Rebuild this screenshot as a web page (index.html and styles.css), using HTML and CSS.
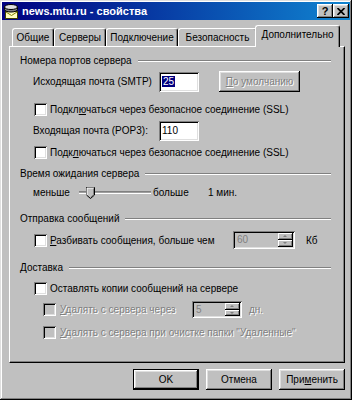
FILE: index.html
```html
<!DOCTYPE html>
<html lang="ru">
<head>
    <meta charset="UTF-8">
    <title>news.mtu.ru - свойства</title>
    <link rel="stylesheet" href="styles.css">
</head>
<body>
<div class="window">
    <div class="titlebar">
        <svg class="app-icon" viewBox="0 0 16 16" width="16" height="16">
            <rect x="2.5" y="8.5" width="12" height="7" fill="#ffffc0" stroke="#404000"/>
            <path d="M3 9 L8.5 12.5 L14 9" fill="none" stroke="#808000"/>
            <path d="M1.5 4 v2.5 a6.5 2.5 0 0 0 13 0 v-2.5" fill="#808080" stroke="#000"/>
            <ellipse cx="8" cy="4" rx="6.5" ry="2.5" fill="#dfdfdf" stroke="#000"/>
        </svg>
        <span class="title">news.mtu.ru - свойства</span>
        <div class="tb-btn">?</div>
        <div class="tb-btn">
            <svg width="8" height="7" viewBox="0 0 8 7"><path d="M0.5 0 L7.5 7 M7.5 0 L0.5 7" stroke="#000" stroke-width="1.7"/></svg>
        </div>
    </div>

    <div class="dialog">
        <div class="tabs">
            <div class="tab tab-general">Общие</div>
            <div class="tab tab-servers">Серверы</div>
            <div class="tab tab-connect">Подключение</div>
            <div class="tab tab-security">Безопасность</div>
            <div class="tab tab-advanced active">Дополнительно</div>
        </div>

        <div class="panel">
            <div class="group-head"><span>Номера портов сервера</span><i class="rule"></i></div>
            <div class="row port-row first-port">
                <span class="field-label">Исхо<u>д</u>ящая почта (SMTP)</span>
                <span class="textbox"><span class="sel">25</span></span>
                <span class="btn btn-default-port disabled"><span><u>П</u>о умолчанию</span></span>
            </div>
            <div class="check-row ssl-1">
                <span class="checkbox"></span>
                <span>Подкл<u>ю</u>чаться через безопасное соединение (SSL)</span>
            </div>
            <div class="row port-row second-port">
                <span class="field-label">Входящая почта (POP3):</span>
                <span class="textbox">110</span>
            </div>
            <div class="check-row ssl-2">
                <span class="checkbox"></span>
                <span>Подк<u>л</u>ючаться через безопасное соединение (SSL)</span>
            </div>

            <div class="group-head gh-timeout"><span>Время ожидания сервера</span><i class="rule"></i></div>
            <div class="row slider-row">
                <span class="sl-min">меньше</span>
                <div class="slider">
                    <div class="track"></div>
                    <svg class="thumb" width="9" height="12" viewBox="0 0 9 12">
                        <path d="M0.5 0.5 H8.5 V8 L4.5 11.5 L0.5 8 Z" fill="#c0c0c0" stroke="#000"/>
                        <path d="M1 8 V1 H8" fill="none" stroke="#fff"/>
                        <path d="M7.5 1.5 V7.7 L4.5 10.3" fill="none" stroke="#808080"/>
                    </svg>
                </div>
                <span class="sl-max">больше</span>
                <span>1 мин.</span>
            </div>

            <div class="group-head gh-send"><span>Отправка сообщений</span><i class="rule"></i></div>
            <div class="check-row split-row">
                <span class="checkbox"></span>
                <span class="split-label"><u>Р</u>азбивать сообщения, больше чем</span>
                <span class="spinner spin-size">
                    <span class="spin-val">60</span>
                    <span class="spin-btns"><span class="spin-up"></span><span class="spin-down"></span></span>
                </span>
                <span class="unit-kb">Кб</span>
            </div>

            <div class="group-head gh-delivery"><span>Доставка</span><i class="rule"></i></div>
            <div class="check-row keep-row">
                <span class="checkbox"></span>
                <span>Оставлять копии сообщений на сервере</span>
            </div>
            <div class="check-row sub-row days-row">
                <span class="checkbox disabled"></span>
                <span class="days-label disabled-text"><u>У</u>далять с сервера через</span>
                <span class="spinner spin-days">
                    <span class="spin-val">5</span>
                    <span class="spin-btns"><span class="spin-up"></span><span class="spin-down"></span></span>
                </span>
                <span class="unit-days disabled-text">дн.</span>
            </div>
            <div class="check-row sub-row purge-row">
                <span class="checkbox disabled"></span>
                <span class="disabled-text"><u>У</u>далять с сервера при очистке папки "Удаленные"</span>
            </div>
        </div>

        <div class="dlg-buttons">
            <span class="btn btn-ok">OK</span>
            <span class="btn">Отмена</span>
            <span class="btn"><span>При<u>м</u>енить</span></span>
        </div>
    </div>
</div>
</body>
</html>
```

FILE: styles.css
```css
* {
    box-sizing: border-box;
}

body {
    margin: 0;
    background: #c0c0c0;
    font-family: "Liberation Sans", Arial, sans-serif;
    font-size: 10px;
    line-height: 13px;
    color: #000;
    white-space: nowrap;
}

u {
    text-decoration: underline;
}

.window {
    width: 352px;
    height: 400px;
    padding: 2px;
    background: #c0c0c0;
    box-shadow: inset -1px -1px #000, inset 1px 1px #dfdfdf, inset -2px -2px #808080, inset 2px 2px #fff;
}

/* title bar */
.titlebar {
    height: 18px;
    display: flex;
    align-items: center;
    padding: 0 1px 0 1px;
    background: linear-gradient(90deg, #000080, #1084d0);
    color: #fff;
    font-size: 11px;
    font-weight: bold;
}

.app-icon {
    margin-right: 3px;
    flex: none;
}

.title {
    flex: 1;
}

.tb-btn {
    width: 16px;
    height: 14px;
    display: flex;
    align-items: center;
    justify-content: center;
    background: #c0c0c0;
    color: #000;
    font-size: 11px;
    font-weight: bold;
    box-shadow: inset -1px -1px #000, inset 1px 1px #fff, inset -2px -2px #808080, inset 2px 2px #dfdfdf;
}

/* dialog body */
.dialog {
    padding: 5px 5px 0 7px;
}

.tabs {
    display: flex;
    align-items: flex-end;
    height: 21px;
    padding-left: 3px;
}

.tab {
    height: 18px;
    padding-top: 2px;
    text-align: center;
    border: 1px solid;
    border-color: #fff #000 transparent #fff;
    border-bottom: none;
    border-radius: 3px 3px 0 0;
    box-shadow: inset -1px 0 #808080;
}

.tab-general { width: 42px; }
.tab-servers { width: 52px; }
.tab-connect { width: 72px; }
.tab-security { width: 79px; }

.tab.active {
    position: relative;
    width: 85px;
    height: 22px;
    margin: 0 -2px -1px -2px;
    padding-top: 2px;
    background: #c0c0c0;
}

.panel {
    width: 336px;
    height: 317px;
    padding: 7px 13px 0 10px;
    border: 1px solid;
    border-color: #fff #000 #000 #fff;
    box-shadow: inset -1px -1px #808080;
}

.group-head {
    display: flex;
    align-items: center;
    gap: 6px;
    height: 13px;
}

.rule {
    flex: 1;
    height: 2px;
    border-top: 1px solid #808080;
    border-bottom: 1px solid #fff;
}

.gh-timeout { margin-top: 8px; }
.gh-send { margin-top: 13px; }
.gh-delivery { margin-top: 12px; }

.row {
    display: flex;
    align-items: center;
    padding-left: 13px;
}

.port-row {
    height: 21px;
}

.first-port { margin-top: 4px; }
.second-port { margin-top: 4px; }

.field-label {
    width: 126px;
}

.textbox {
    width: 40px;
    height: 20px;
    padding: 3px 0 0 3px;
    background: #fff;
    box-shadow: inset 1px 1px #808080, inset -1px -1px #fff, inset 2px 2px #000, inset -2px -2px #dfdfdf;
}

.sel {
    background: #000080;
    color: #fff;
    padding: 0 1px;
}

.btn {
    display: flex;
    align-items: center;
    justify-content: center;
    width: 66px;
    height: 21px;
    background: #c0c0c0;
    box-shadow: inset -1px -1px #000, inset 1px 1px #fff, inset -2px -2px #808080, inset 2px 2px #dfdfdf;
}

.btn-default-port {
    width: 81px;
    margin-left: 20px;
}

.disabled,
.disabled-text {
    color: #808080;
    text-shadow: 1px 1px 0 #fff;
}

.check-row {
    display: flex;
    align-items: center;
    padding-left: 14px;
    height: 13px;
}

.checkbox {
    flex: none;
    width: 13px;
    height: 13px;
    margin-right: 3px;
    background: #fff;
    box-shadow: inset 1px 1px #808080, inset -1px -1px #fff, inset 2px 2px #000, inset -2px -2px #dfdfdf;
}

.checkbox.disabled {
    background: #c0c0c0;
}

.ssl-1 { margin-top: 11px; }
.ssl-2 { margin-top: 5px; }

/* slider */
.slider-row {
    height: 14px;
    margin-top: 5px;
}

.sl-min {
    width: 46px;
}

.slider {
    position: relative;
    width: 74px;
    height: 14px;
}

.track {
    width: 72px;
    height: 3px;
    margin-top: 6px;
    border-top: 1px solid #808080;
    border-bottom: 1px solid #fff;
    background: #a0a0a0;
}

.thumb {
    position: absolute;
    left: 7px;
    top: 2px;
}

.sl-max {
    width: 55px;
}

/* spinners */
.split-row {
    height: 18px;
    margin-top: 6px;
}

.split-label {
    width: 183px;
}

.spinner {
    display: flex;
    align-items: stretch;
    padding: 2px;
    background: #c0c0c0;
    box-shadow: inset 1px 1px #808080, inset -1px -1px #fff, inset 2px 2px #000, inset -2px -2px #dfdfdf;
}

.spin-size {
    width: 62px;
    height: 18px;
}

.spin-days {
    width: 50px;
    height: 17px;
}

.spin-val {
    flex: 1;
    padding-left: 2px;
    color: #808080;
    line-height: 13px;
}

.spin-btns {
    display: flex;
    flex-direction: column;
    width: 15px;
}

.spin-up,
.spin-down {
    flex: 1;
    position: relative;
    box-shadow: inset -1px -1px #000, inset 1px 1px #fff, inset -2px -2px #808080;
}

.spin-up::after,
.spin-down::after {
    content: "";
    position: absolute;
    left: 5px;
    top: 2px;
    border-left: 2px solid transparent;
    border-right: 2px solid transparent;
}

.spin-up::after {
    border-bottom: 2px solid #808080;
}

.spin-down::after {
    border-top: 2px solid #808080;
}

.unit-kb {
    margin-left: 11px;
}

.keep-row { margin-top: 8px; }

.sub-row {
    padding-left: 23px;
}

.sub-row .checkbox {
    margin-right: 4px;
}

.days-row {
    height: 17px;
    margin-top: 6px;
}

.days-label {
    width: 132px;
}

.unit-days {
    margin-left: 7px;
}

.purge-row { margin-top: 8px; }

/* bottom buttons */
.dlg-buttons {
    display: flex;
    justify-content: flex-end;
    gap: 7px;
    margin-top: 6px;
}

.btn-ok {
    border: 1px solid #000;
}
```
